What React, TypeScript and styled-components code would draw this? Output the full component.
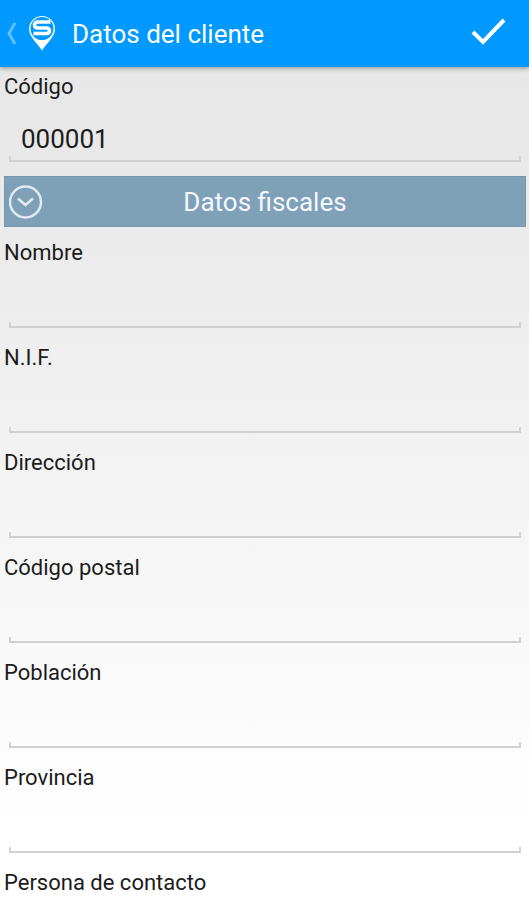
import React, { useState } from "react";
import styled, { createGlobalStyle } from "styled-components";

const GlobalStyle = createGlobalStyle`
  * { box-sizing: border-box; }
  body { margin: 0; }
  body, button, input { font-family: Roboto, sans-serif; }
`;

const Screen = styled.div`
  display: flex;
  flex-direction: column;
  height: 100vh;
  background: linear-gradient(#e6e6e6, #e9e9e9 20%, #fff 92%);
  color: #1c1c1c;
`;

const Header = styled.header`
  display: flex;
  flex: none;
  align-items: center;
  height: 67px;
  padding: 0 16px 0 4px;
  background: #0099ff;
  color: #fff;
  box-shadow: 0 1px 5px rgba(0, 0, 0, 0.4);
`;

const BarButton = styled.button`
  display: flex;
  align-items: center;
  padding: 0;
  border: 0;
  background: none;
  color: inherit;
  cursor: pointer;
`;

const Title = styled.h1`
  flex: 1;
  margin: 0 0 0 12px;
  font-size: 26px;
  font-weight: 400;
  line-height: 32px;
`;

const Form = styled.form`
  flex: 1;
  min-height: 0;
  padding-top: 4px;
  overflow-y: auto;
  scrollbar-width: none;
`;

const FieldRow = styled.div`
  display: flex;
  flex-direction: column;
  margin-bottom: 14px;
`;

const Label = styled.label`
  padding-left: 4px;
  font-size: 22px;
  line-height: 32px;
`;

const Input = styled.input`
  height: 59px;
  margin: 0 8px 0 9px;
  padding: 14px 12px 0;
  border: 0;
  border-bottom: 2px solid #d0d0d0;
  border-radius: 0;
  outline: none;
  background:
    linear-gradient(#d4d4d4, #d4d4d4) left bottom / 2px 4px no-repeat,
    linear-gradient(#d4d4d4, #d4d4d4) right bottom / 2px 4px no-repeat;
  color: inherit;
  font-size: 26px;
`;

const SectionButton = styled.button`
  display: grid;
  grid-template-columns: 36px 1fr 36px;
  align-items: center;
  width: calc(100% - 7px);
  height: 51px;
  margin: 0 3px 10px 4px;
  padding: 0 4px;
  border: 1px solid #7599b1;
  background: #7fa1b8;
  color: #f4f8ff;
  font-size: 26px;
  cursor: pointer;
`;

const fiscalFields = [
  { id: "nombre", label: "Nombre" },
  { id: "nif", label: "N.I.F." },
  { id: "direccion", label: "Dirección" },
  { id: "codigo-postal", label: "Código postal" },
  { id: "poblacion", label: "Población" },
  { id: "provincia", label: "Provincia" },
  { id: "contacto", label: "Persona de contacto" },
];

function BackPinIcon() {
  return (
    <svg width="56" height="40" viewBox="0 0 56 40" fill="none" aria-hidden="true">
      <path d="M11 9L5 19.500l6 10.500" stroke="#63bfff" strokeWidth="3" />
      <path d="M38 36.500C34 30 25 23 25 15a13 13 0 0 1 26 0c0 8-9 15-13 21.500z" fill="#fff" />
      <circle cx="38" cy="14.500" r="11.500" fill="#0099ff" />
      <path
        d="M46.500 8H34q-3.500 0-3.500 3t3.500 3h8q3.500 0 3.500 2.750t-3.500 2.750H29.500"
        stroke="#fff"
        strokeWidth="3.500"
      />
    </svg>
  );
}

function CheckIcon() {
  return (
    <svg width="44" height="40" viewBox="0 0 44 40" fill="none" aria-hidden="true">
      <path d="M4 18l10 10L35 6" stroke="#fff" strokeWidth="4" />
    </svg>
  );
}

function ChevronCircle({ open }: { open: boolean }) {
  return (
    <svg width="34" height="34" viewBox="0 0 34 34" fill="none" stroke="#dfebf5" aria-hidden="true">
      <circle cx="16.500" cy="17" r="15.500" strokeWidth="2.500" />
      <path d={open ? "M9 13.500l7.500 6.500 7.500-6.500" : "M13 9.500l6.500 7.500-6.500 7.500"} strokeWidth="2.500" />
    </svg>
  );
}

function Field({ id, label, initial = "" }: { id: string; label: string; initial?: string }) {
  return (
    <FieldRow>
      <Label htmlFor={id}>{label}</Label>
      <Input id={id} name={id} type="text" defaultValue={initial} />
    </FieldRow>
  );
}

export default function App() {
  const [open, setOpen] = useState(true);
  return (
    <>
      <GlobalStyle />
      <Screen>
        <Header>
          <BarButton type="button" aria-label="Volver">
            <BackPinIcon />
          </BarButton>
          <Title>Datos del cliente</Title>
          <BarButton type="submit" form="cliente" aria-label="Guardar">
            <CheckIcon />
          </BarButton>
        </Header>
        <Form id="cliente" onSubmit={(e) => e.preventDefault()}>
          <Field id="codigo" label="Código" initial="000001" />
          <SectionButton type="button" aria-expanded={open} onClick={() => setOpen(!open)}>
            <ChevronCircle open={open} />
            <span>Datos fiscales</span>
          </SectionButton>
          {open && fiscalFields.map((field) => <Field key={field.id} {...field} />)}
        </Form>
      </Screen>
    </>
  );
}
